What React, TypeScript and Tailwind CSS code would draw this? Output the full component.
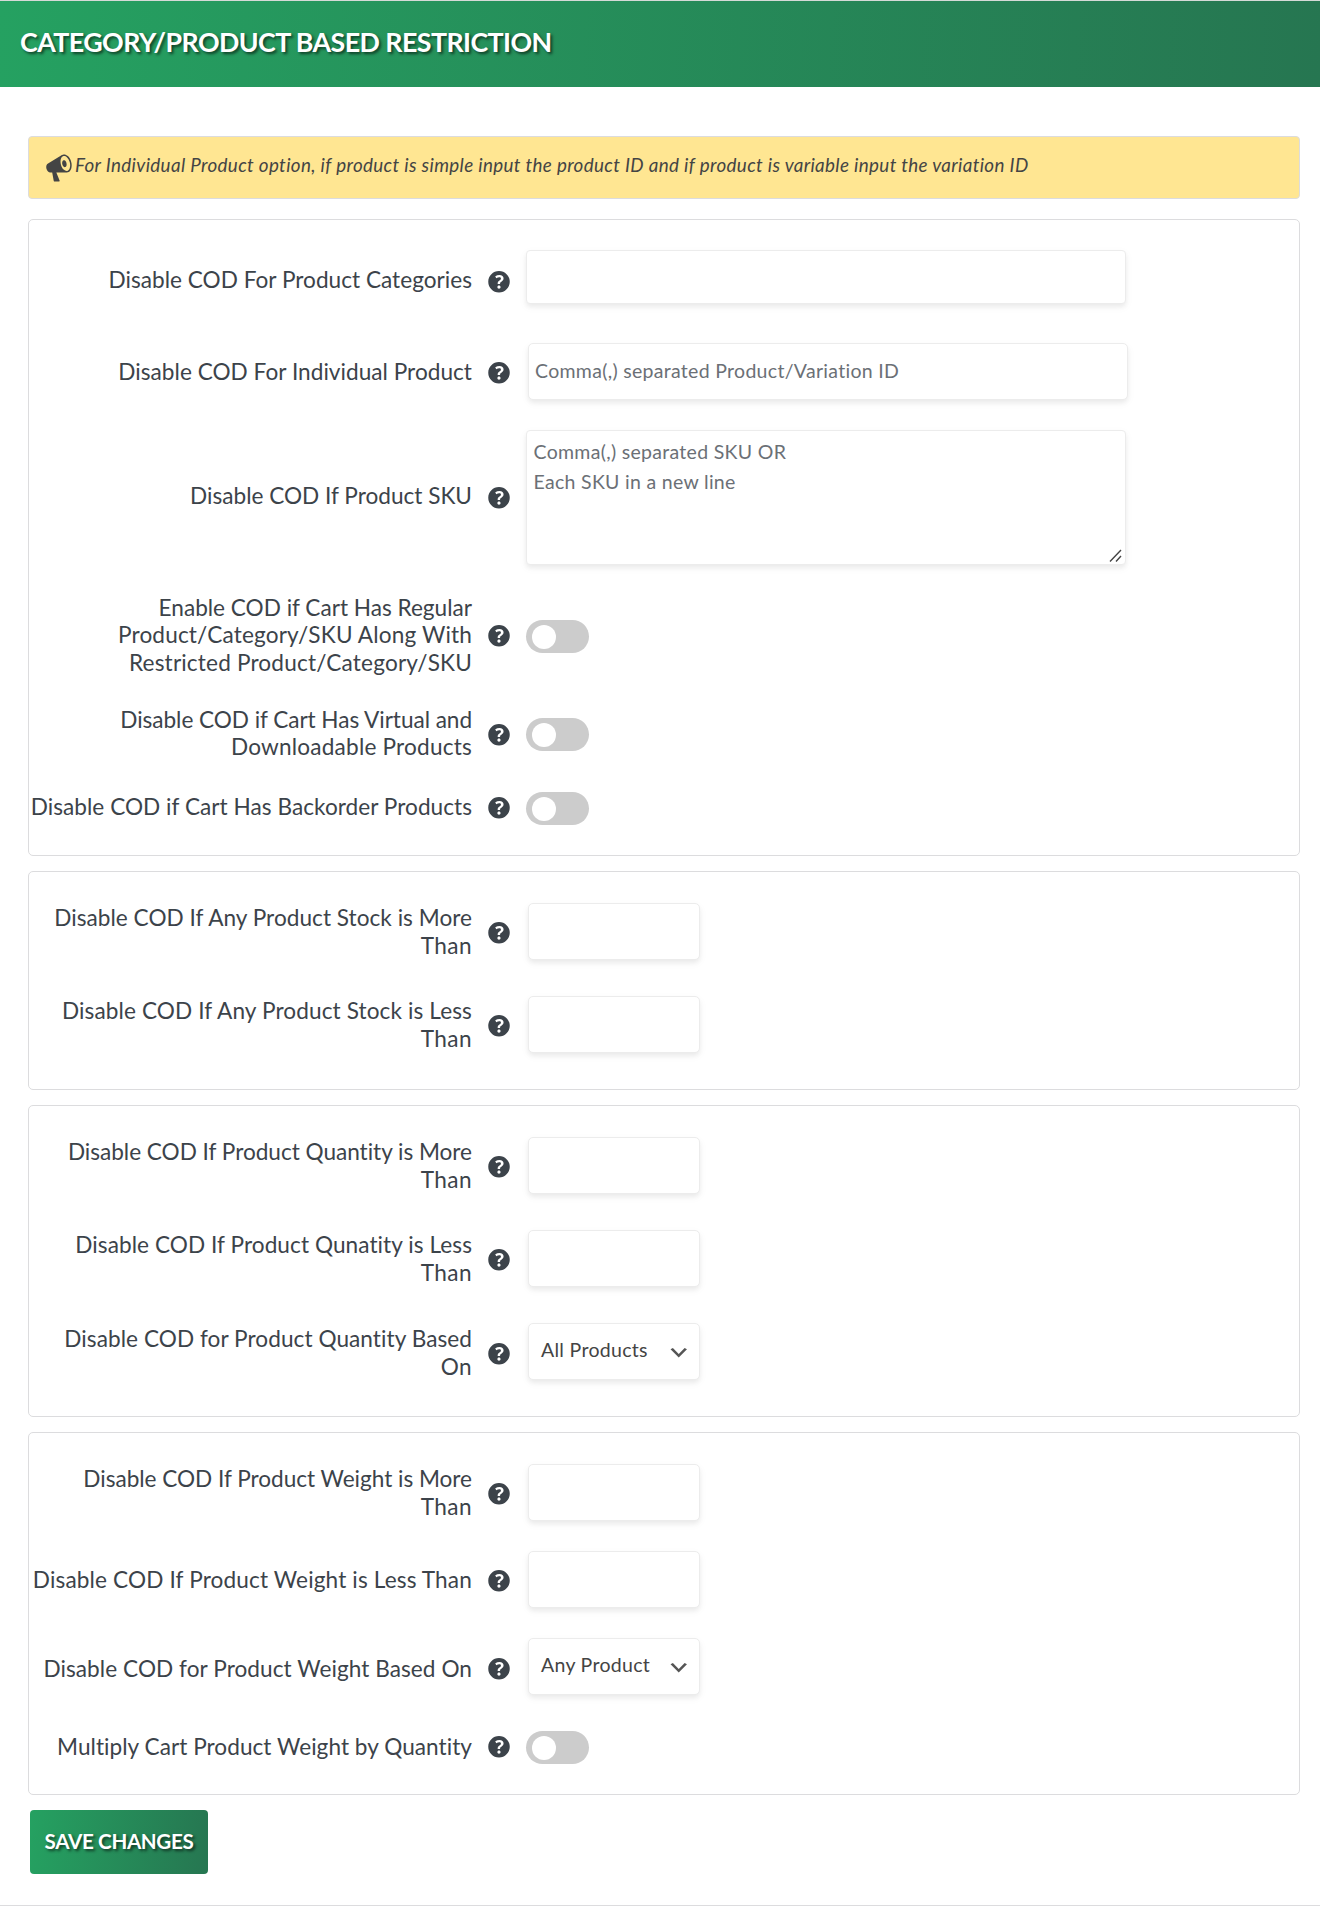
import type { ReactNode } from "react";

function HelpIcon({ className = "" }: { className?: string }) {
  return (
    <svg viewBox="3 3 14 14" className={`ml-4 h-[21.5px] w-[22px] shrink-0 fill-[#3c434a] ${className}`}>
      <path d="M17 10c0-3.87-3.14-7-7-7-3.87 0-7 3.13-7 7s3.13 7 7 7c3.86 0 7-3.13 7-7zm-6.3 1.48H9.14v-.43c0-.38.08-.7.24-.98s.46-.57.88-.89c.41-.29.68-.53.81-.71.14-.18.2-.39.2-.62 0-.25-.09-.44-.28-.58-.19-.13-.45-.19-.79-.19-.58 0-1.25.19-2 .57l-.64-1.28c.87-.49 1.8-.74 2.77-.74.81 0 1.45.2 1.92.58.48.39.71.91.71 1.55 0 .43-.09.8-.29 1.11-.19.32-.57.67-1.11 1.06-.38.28-.61.49-.71.63-.1.15-.15.34-.15.57v.35zm-1.47 2.74c-.18-.17-.27-.42-.27-.73 0-.33.08-.58.26-.75s.43-.25.77-.25c.32 0 .57.09.75.26s.27.42.27.74c0 .3-.09.55-.27.72-.18.18-.43.27-.75.27-.33 0-.58-.09-.76-.26z" />
    </svg>
  );
}

function MegaphoneIcon() {
  return (
    <svg viewBox="0 0 20 20" className="size-[30px] shrink-0 fill-[#444]">
      <path d="M18.15 5.94c.46 1.62.38 3.22-.02 4.48-.42 1.28-1.26 2.18-2.3 2.48-.16.06-.26.06-.4.06-.06.02-.12.02-.18.02-.06.02-.14.02-.22.02h-6.8l2.22 5.5c.02.14-.06.26-.14.34-.08.1-.24.16-.34.16H6.95c-.1 0-.26-.06-.34-.16-.08-.08-.16-.2-.14-.34l-1-5.5H4.25l-.02-.02c-.5.06-1.08-.18-1.54-.62s-.88-1.08-1.06-1.88c-.24-.8-.2-1.56-.02-2.2.18-.62.58-1.08 1.06-1.3l.02-.02 9-5.4c.1-.06.18-.1.24-.16.06-.04.14-.08.24-.12.16-.08.28-.12.5-.18 1.04-.3 2.24.1 3.22.98s1.84 2.24 2.26 3.86zm-2.58 5.98h-.02c.4-.1.74-.34 1.04-.7.58-.7.86-1.76.86-3.04 0-.64-.1-1.3-.28-1.98-.34-1.36-1.02-2.5-1.78-3.24s-1.68-1.1-2.46-.88c-.82.22-1.4.96-1.7 2-.32 1.04-.28 2.36.06 3.72.38 1.36 1 2.5 1.8 3.24.78.74 1.62 1.1 2.48.88zm-2.54-7.08c.22-.04.42-.02.62.04.38.16.76.48 1.02 1s.42 1.2.42 1.78c0 .3-.04.56-.12.8-.18.48-.44.84-.86.94-.34.1-.8-.06-1.14-.4s-.64-.86-.78-1.5c-.18-.62-.12-1.24.02-1.72s.48-.84.82-.94z" />
    </svg>
  );
}

const box =
  "shrink-0 border border-[#ececec] bg-white shadow-[0_3px_4px_rgba(0,0,0,0.05),0_3px_10px_rgba(0,0,0,0.045)]";
const fieldText = "text-[19.5px] tracking-[0.3px]";

type RowProps = {
  label: ReactNode;
  children: ReactNode;
  className: string;
  labelClass?: string;
  helpClass?: string;
};

function Row({ label, children, className, labelClass = "tracking-[0.03px]", helpClass = "mt-[3px]" }: RowProps) {
  return (
    <div className={`flex items-center ${className}`}>
      <div
        className={`w-[443px] shrink-0 text-right text-[22.6px] leading-[27.4px] whitespace-nowrap text-[#3c434a] ${labelClass}`}
      >
        {label}
      </div>
      <HelpIcon className={helpClass} />
      {children}
    </div>
  );
}

function TwoLines({ first, last }: { first: string; last: string }) {
  return (
    <>
      {first}
      <br />
      <span className="tracking-[0.4px]">{last}</span>
    </>
  );
}

function NumberField() {
  return <input type="text" className={`${box} ml-[18px] h-[57px] w-[172px] rounded-[5px] px-2 outline-none`} />;
}

function SelectField({ value }: { value: string }) {
  return (
    <button
      type="button"
      className={`${box} ml-[18px] flex h-[57px] w-[172px] items-center justify-between rounded-[5px] pr-[8.5px] pl-[12px]`}
    >
      <span className={`${fieldText} -mt-[3px] whitespace-nowrap text-[#444]`}>{value}</span>
      <svg viewBox="0 0 20 20" className="mt-[3px] size-[23.5px] shrink-0 fill-[#555]">
        <path d="M5 6l5 5 5-5 2 1-7 7-7-7 2-1z" />
      </svg>
    </button>
  );
}

function Toggle() {
  return (
    <button type="button" role="switch" aria-checked="false" className="ml-4 flex h-[33px] w-[63px] shrink-0 items-center rounded-full bg-[#ccc] pl-[6px]">
      <span className="size-6 rounded-full bg-white" />
    </button>
  );
}

function Panel({ className, children }: { className: string; children: ReactNode }) {
  return <section className={`flex flex-col rounded-[5px] border border-[#dcdcde] bg-white ${className}`}>{children}</section>;
}

export default function App() {
  return (
    <div className="h-[1909px] w-[1320px] overflow-hidden bg-white font-['Lato',sans-serif] [font-variant-ligatures:none]">
      <div className="h-[1905px] border-t border-[#d5dad7]">
        <header className="flex h-[86px] items-start bg-[linear-gradient(92deg,#25a161,#267651)] pt-[24px] pl-[20px]">
          <h1 className="text-[26.8px] leading-[34px] font-bold tracking-[-0.58px] whitespace-nowrap text-white [text-shadow:2px_2px_3px_rgba(0,0,0,0.6)]">
            CATEGORY/PRODUCT BASED RESTRICTION
          </h1>
        </header>

        <main className="flex w-[1300px] flex-col pl-[28px]">
          <div className="mt-[49px] flex h-[63px] items-center rounded-[4px] border border-[#dcdcde] bg-[#ffe692] pl-[15px]">
            <MegaphoneIcon />
            <p className="-mt-1 ml-[1px] text-[18.8px] tracking-[0.36px] whitespace-nowrap text-[#444] italic">
              For Individual Product option, if product is simple input the product ID and if product is variable input the variation ID
            </p>
          </div>

          <Panel className="mt-[20px] h-[637px]">
            <Row
              className="mt-[30px] h-[54px]"
              label="Disable COD For Product Categories"
              labelClass="mt-[6px] tracking-[0.02px]"
              helpClass="mt-[10px]"
            >
              <div className={`${box} ml-4 h-[54px] w-[600px] rounded-[4px]`} />
            </Row>
            <Row
              className="mt-[39px] h-[57px]"
              label="Disable COD For Individual Product"
              labelClass="mt-px tracking-[0.03px]"
              helpClass="mt-[3px]"
            >
              <input
                type="text"
                placeholder="Comma(,) separated Product/Variation ID"
                className={`${box} ${fieldText} ml-[18px] h-[57px] w-[600px] rounded-[5px] px-[6px] pb-[2px] outline-none placeholder:text-[#6b7076]`}
              />
            </Row>
            <Row
              className="mt-[30px] h-[135px]"
              label="Disable COD If Product SKU"
              labelClass="-mt-[3px]"
              helpClass="mt-px"
            >
              <div className={`${box} ${fieldText} relative ml-4 h-[135px] w-[600px] rounded-[4px] px-[6.5px] pt-[6px] leading-[30.3px] text-[#6b7076]`}>
                <p>Comma(,) separated SKU OR</p>
                <p>Each SKU in a new line</p>
                <svg viewBox="0 0 13 13" className="absolute right-[3px] bottom-[2px] size-[13px] fill-none stroke-[#444] stroke-[1.4]">
                  <path d="M1 12.5L12 1M7 12.5L12 7" />
                </svg>
              </div>
            </Row>
            <Row
              className="mt-[55px] h-[33px]"
              label={
                <>
                  Enable COD if Cart Has Regular
                  <br />
                  <span className="tracking-[0.15px]">Product/Category/SKU Along With</span>
                  <br />
                  <span className="tracking-[0.17px]">Restricted Product/Category/SKU</span>
                </>
              }
              labelClass="-mt-[3px]"
              helpClass="-mt-px"
            >
              <Toggle />
            </Row>
            <Row
              className="mt-[65px] h-[33px]"
              label={
                <>
                  <span className="tracking-[-0.05px]">Disable COD if Cart Has Virtual and</span>
                  <br />
                  <span className="tracking-[0.2px]">Downloadable Products</span>
                </>
              }
              labelClass="-mt-[3px]"
              helpClass="mt-px"
            >
              <Toggle />
            </Row>
            <Row
              className="mt-[41px] h-[33px]"
              label="Disable COD if Cart Has Backorder Products"
              labelClass="-mt-[3px] tracking-[0.04px]"
              helpClass="-mt-px"
            >
              <Toggle />
            </Row>
          </Panel>

          <Panel className="mt-[15px] h-[219px]">
            <Row className="mt-[31px] h-[57px]" label={<TwoLines first="Disable COD If Any Product Stock is More" last="Than" />}>
              <NumberField />
            </Row>
            <Row
              className="mt-[36px] h-[57px]"
              label={<TwoLines first="Disable COD If Any Product Stock is Less" last="Than" />}
              labelClass="tracking-[0.11px]"
            >
              <NumberField />
            </Row>
          </Panel>

          <Panel className="mt-[15px] h-[312px]">
            <Row
              className="mt-[31px] h-[57px]"
              label={<TwoLines first="Disable COD If Product Quantity is More" last="Than" />}
              labelClass="tracking-[-0.02px]"
            >
              <NumberField />
            </Row>
            <Row
              className="mt-[36px] h-[57px]"
              label={<TwoLines first="Disable COD If Product Qunatity is Less" last="Than" />}
              labelClass="tracking-[0.07px]"
            >
              <NumberField />
            </Row>
            <Row
              className="mt-[36px] h-[57px]"
              label={<TwoLines first="Disable COD for Product Quantity Based" last="On" />}
              labelClass="mt-[2px] tracking-[0.06px]"
              helpClass="mt-[5px]"
            >
              <SelectField value="All Products" />
            </Row>
          </Panel>

          <Panel className="mt-[15px] h-[363px]">
            <Row
              className="mt-[31px] h-[57px]"
              label={<TwoLines first="Disable COD If Product Weight is More" last="Than" />}
              labelClass="tracking-[-0.02px]"
            >
              <NumberField />
            </Row>
            <Row
              className="mt-[30px] h-[57px]"
              label="Disable COD If Product Weight is Less Than"
              labelClass="tracking-[0.14px]"
            >
              <NumberField />
            </Row>
            <Row
              className="mt-[30px] h-[57px]"
              label="Disable COD for Product Weight Based On"
              labelClass="mt-1 tracking-[0.06px]"
              helpClass="mt-[5px]"
            >
              <SelectField value="Any Product" />
            </Row>
            <Row
              className="mt-[36px] h-[33px]"
              label="Multiply Cart Product Weight by Quantity"
              labelClass="-mt-[2px] tracking-[0.04px]"
              helpClass="-mt-px"
            >
              <Toggle />
            </Row>
          </Panel>

          <button
            type="button"
            className="mt-[15px] ml-[2px] flex h-[64px] w-[178px] items-center justify-center rounded-[4px] bg-[linear-gradient(95deg,#25a161,#267651)] pb-[2px] text-[20.6px] font-bold tracking-[-0.35px] whitespace-nowrap text-white [text-shadow:2px_2px_3px_rgba(0,0,0,0.6)]"
          >
            SAVE CHANGES
          </button>
        </main>
      </div>
      <div className="h-px bg-[#dcdcde]" />
    </div>
  );
}
